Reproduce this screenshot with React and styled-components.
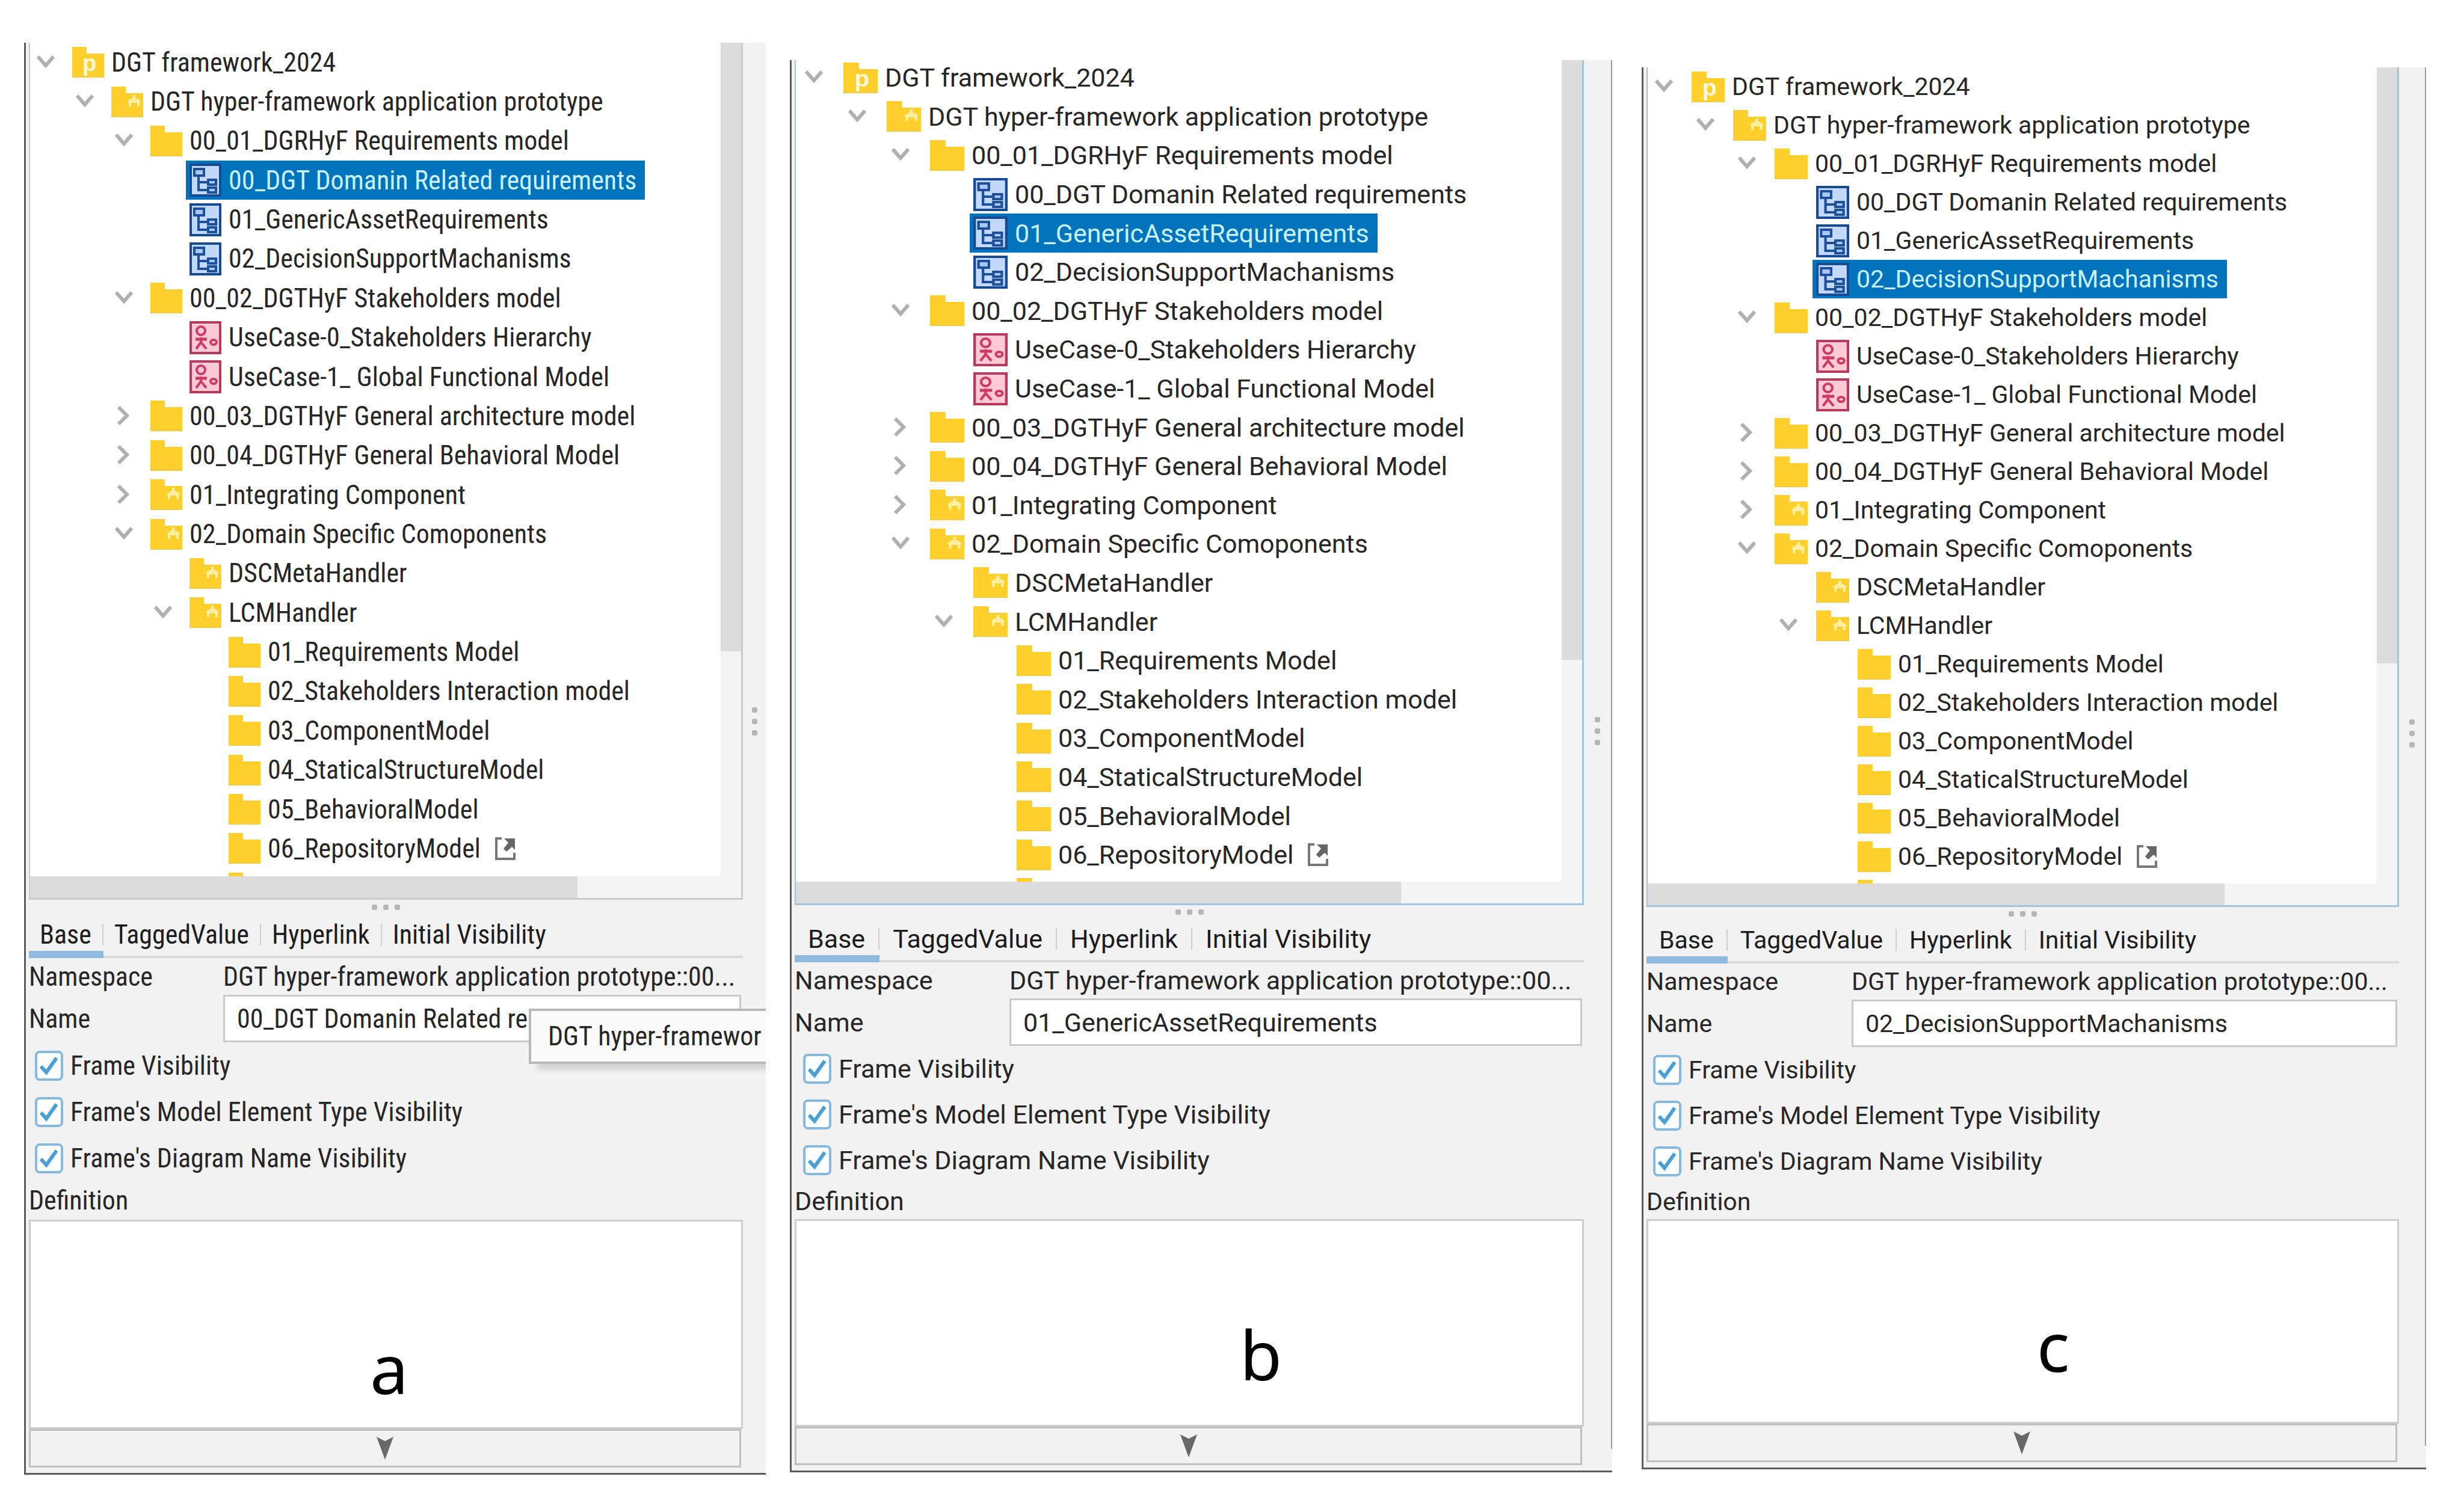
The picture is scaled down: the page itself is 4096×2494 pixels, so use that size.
import React, { useId, useState } from "react";
import styled, { createGlobalStyle, css, ThemeProvider } from "styled-components";

const GlobalStyle = createGlobalStyle`
  * {
    box-sizing: border-box;
  }

  body {
    margin: 0;
    background: #fff;
    color: #262626;
  }

  button, input, textarea {
    font: inherit;
    color: inherit;
  }
`;

const Page = styled.main`
  display: grid;
  grid-template-columns: 1233fr 1367fr 1313fr;
  column-gap: 40px;
  align-items: start;
  min-height: 100vh;
  padding: 0 63px 0 40px;
`;

const Panel = styled.section`
  display: flex;
  margin-top: ${({ theme }) => theme.top}px;
  margin-left: ${({ theme }) => theme.inset}px;
  padding-left: 5px;
  overflow: hidden;
  background: #f2f2f2;
  border-left: 3px solid #5c5c5c;
  border-bottom: 3px solid #5c5c5c;
  font-family: ${({ theme }) => theme.font}, "Liberation Sans", sans-serif;
  font-size: ${({ theme }) => theme.size}px;
  line-height: 52px;
  white-space: nowrap;
`;

const Main = styled.div`
  flex: 1;
  min-width: 0;
  padding-bottom: 9px;
`;

const Gutter = styled.div`
  display: flex;
  flex-direction: column;
  align-items: center;
  gap: 10px;
  flex: none;
  width: ${({ theme }) => theme.gutter}px;
  margin-bottom: 36px;
  padding-top: ${({ theme }) => theme.gripTop}px;
  border-right: ${({ theme }) => (theme.edge ? "2px solid #9a9a9a" : "none")};
`;

const Dot = styled.i`
  width: 9px;
  height: 9px;
  border-radius: 3px;
  background: #b6b6b6;
`;

/* tree */

const TreePane = styled.div`
  border: 3px solid ${({ theme }) => theme.frame};
  border-width: 0 3px 3px 2px;
`;

const TreeView = styled.div`
  display: flex;
  height: ${({ theme }) => theme.viewHeight}px;
  overflow: hidden;
  background: #fff;
`;

const TreeList = styled.ul`
  display: grid;
  grid-auto-rows: 1fr;
  flex: 1;
  height: ${({ theme }) => theme.listHeight}px;
  margin: ${({ theme }) => theme.scrolled}px 0 0;
  padding: 0 0 0 ${({ theme }) => theme.treePad}px;
  list-style: none;
`;

const TreeRow = styled.li`
  display: flex;
  align-items: stretch;
  min-height: 0;
  padding-left: ${({ theme, $depth }) => theme.indent * $depth}px;
`;

const Toggle = styled.button`
  display: flex;
  align-items: center;
  justify-content: center;
  width: 30px;
  padding: 0;
  border: 0;
  background: none;
  visibility: ${({ $hidden }) => ($hidden ? "hidden" : "visible")};
`;

const Node = styled.button`
  display: flex;
  align-items: center;
  gap: 12px;
  margin-left: ${({ theme }) => theme.nodeGap}px;
  padding: 0 14px 0 6px;
  border: 0;
  background: none;
  white-space: pre;

  ${({ $selected }) =>
    $selected &&
    css`
      background: #0073bd;
      color: #c8f2ff;
    `}
`;

const TreeIcon = styled.svg`
  display: block;
  flex: none;
  width: ${({ theme }) => theme.icon}px;
  height: 55px;
`;

const LinkIcon = styled.svg`
  align-self: center;
  width: 34px;
  height: 38px;
  margin-left: 12px;
`;

const Thumb = styled.div`
  background: #dcdcdc;
`;

const ScrollY = styled.div`
  flex: none;
  width: 34px;
  background: #f4f4f4;

  ${Thumb} {
    height: 73%;
  }
`;

const ScrollX = styled.div`
  height: 36px;
  background: #f4f4f4;

  ${Thumb} {
    width: 77%;
    height: 100%;
  }
`;

const Splitter = styled.div`
  display: flex;
  align-items: center;
  justify-content: center;
  gap: 10px;
  height: ${({ theme }) => theme.splitter}px;
`;

/* properties */

const Tabs = styled.div`
  display: flex;
  height: 72px;
  box-shadow: inset 0 -4px #dadada;
`;

const Tab = styled.button`
  display: flex;
  align-items: center;
  padding: 6px 0 0;
  border: 0;
  border-bottom: 12px solid ${({ $active }) => ($active ? "#8fbadd" : "transparent")};
  background: none;
  color: #1c1c1c;

  span {
    padding: 0 ${({ theme }) => theme.tabPad}px;
    line-height: 36px;
  }

  &:not(:last-child) span {
    border-right: 2px solid #cfcfcf;
  }
`;

const Field = styled.div`
  display: grid;
  grid-template-columns: ${({ theme }) => theme.labelWidth}px 1fr;
  align-items: center;
  position: relative;
`;

const NamespaceField = styled(Field)`
  height: ${({ theme }) => theme.namespaceHeight}px;
`;

const NameInput = styled.input`
  min-width: 0;
  height: 79px;
  margin-right: 3px;
  padding: 0 20px;
  border: 3px solid #c9c9c9;
  background: #fff;
`;

const Tooltip = styled.div`
  position: absolute;
  z-index: 1;
  top: 23px;
  left: 70%;
  right: -48px;
  padding: 16px 28px;
  border: 4px solid #b9b9b9;
  background: #fbfbfb;
  box-shadow: 14px 10px 8px rgba(0, 0, 0, 0.12);
`;

const CheckField = styled.label`
  display: flex;
  align-items: center;
  gap: 12px;
  height: ${({ theme }) => theme.checkHeight}px;
  padding-left: ${({ theme }) => theme.checkPad}px;
`;

const CheckBox = styled.span`
  display: grid;
  flex: none;
  width: 47px;
  height: 50px;

  input, svg {
    grid-area: 1 / 1;
    width: 100%;
    height: 100%;
    margin: 0;
  }

  input {
    appearance: none;
    border: 4px solid #86b9dc;
    border-radius: 8px;
    background: #fafeff;
  }

  svg {
    pointer-events: none;
    visibility: hidden;
  }

  input:checked + svg {
    visibility: visible;
  }
`;

const DefinitionLabel = styled.label`
  display: block;
  height: ${({ theme }) => theme.definitionHeight}px;
  line-height: ${({ theme }) => theme.definitionHeight}px;
`;

const Definition = styled.div`
  position: relative;
`;

const DefinitionInput = styled.textarea`
  display: block;
  width: 100%;
  height: ${({ theme }) => theme.definitionBox}px;
  padding: 12px;
  border: 3px solid #cdcdcd;
  background: #fff;
  resize: none;
`;

const Caption = styled.strong`
  position: absolute;
  left: ${({ theme }) => theme.captionX}px;
  bottom: ${({ theme }) => theme.captionY}px;
  transform: translateX(-50%);
  color: #000;
  font-family: "Noto Sans", sans-serif;
  font-size: 114px;
  font-weight: 400;
  line-height: 120px;
`;

const ExpandButton = styled.button`
  display: flex;
  align-items: center;
  justify-content: center;
  width: calc(100% - 3px);
  height: 64px;
  padding: 0;
  border: 3px solid #c0c0c0;
  background: #f2f2f2;
`;

const nodes = [
  { depth: 0, icon: "project", text: "DGT framework_2024", open: true },
  { depth: 1, icon: "package", text: "DGT hyper-framework application prototype", open: true },
  { depth: 2, icon: "folder", text: "00_01_DGRHyF Requirements model", open: true },
  { depth: 3, icon: "requirement", text: "00_DGT Domanin Related requirements" },
  { depth: 3, icon: "requirement", text: "01_GenericAssetRequirements" },
  { depth: 3, icon: "requirement", text: "02_DecisionSupportMachanisms" },
  { depth: 2, icon: "folder", text: "00_02_DGTHyF Stakeholders model", open: true },
  { depth: 3, icon: "usecase", text: "UseCase-0_Stakeholders Hierarchy" },
  { depth: 3, icon: "usecase", text: "UseCase-1_ Global Functional Model" },
  { depth: 2, icon: "folder", text: "00_03_DGTHyF General architecture model", open: false },
  { depth: 2, icon: "folder", text: "00_04_DGTHyF General Behavioral Model", open: false },
  { depth: 2, icon: "package", text: "01_Integrating Component", open: false },
  { depth: 2, icon: "package", text: "02_Domain Specific Comoponents", open: true },
  { depth: 3, icon: "package", text: "DSCMetaHandler" },
  { depth: 3, icon: "package", text: "LCMHandler", open: true },
  { depth: 4, icon: "folder", text: "01_Requirements Model" },
  { depth: 4, icon: "folder", text: "02_Stakeholders Interaction model" },
  { depth: 4, icon: "folder", text: "03_ComponentModel" },
  { depth: 4, icon: "folder", text: "04_StaticalStructureModel" },
  { depth: 4, icon: "folder", text: "05_BehavioralModel" },
  { depth: 4, icon: "folder", text: "06_RepositoryModel", link: true },
  { depth: 4, icon: "folder", text: "" },
];

const tabs = ["Base", "TaggedValue", "Hyperlink", "Initial Visibility"];

const checks = [
  "Frame Visibility",
  "Frame's Model Element Type Visibility",
  "Frame's Diagram Name Visibility",
];

const panels = [
  {
    caption: "a",
    selected: "00_DGT Domanin Related requirements",
    tooltip: "DGT hyper-framewor",
    theme: {
      font: '"Roboto Condensed"', size: 44, top: 71, inset: 0, gutter: 38, edge: false,
      frame: "#cacaca", viewHeight: 1386, listHeight: 1438, scrolled: 0, gripTop: 1105,
      treePad: 11, indent: 65, nodeGap: 23, icon: 53, splitter: 25, tabPad: 18,
      labelWidth: 323, namespaceHeight: 61, checkHeight: 77, checkPad: 10,
      definitionHeight: 64, definitionBox: 348, captionX: 599, captionY: 42,
    },
  },
  {
    caption: "b",
    selected: "01_GenericAssetRequirements",
    theme: {
      font: "Roboto", size: 43, top: 100, inset: 0, gutter: 47, edge: true,
      frame: "#a3c5db", viewHeight: 1366, listHeight: 1421, scrolled: -3, gripTop: 1092,
      treePad: 15, indent: 72, nodeGap: 28, icon: 57, splitter: 23, tabPad: 22,
      labelWidth: 357, namespaceHeight: 60, checkHeight: 76, checkPad: 14,
      definitionHeight: 60, definitionBox: 345, captionX: 775, captionY: 61,
    },
  },
  {
    caption: "c",
    selected: "02_DecisionSupportMachanisms",
    theme: {
      font: "Roboto", size: 41, top: 112, inset: 9, gutter: 45, edge: true,
      frame: "#a3c5db", viewHeight: 1357, listHeight: 1408, scrolled: 0, gripTop: 1084,
      treePad: 12, indent: 69, nodeGap: 25, icon: 55, splitter: 22, tabPad: 21,
      labelWidth: 341, namespaceHeight: 60, checkHeight: 76, checkPad: 11,
      definitionHeight: 58, definitionBox: 340, captionX: 676, captionY: 70,
    },
  },
];

function NodeIcon({ type }) {
  if (type === "requirement") {
    return (
      <TreeIcon viewBox="0 0 53 55" preserveAspectRatio="none" aria-hidden="true">
        <rect x="2" y="2" width="49" height="51" fill="#c3d9fb" stroke="#164a94" strokeWidth="4" />
        <g fill="#a9c8f8" stroke="#1c4f9c" strokeWidth="4">
          <path d="M15 20V44H31M15 31H31" fill="none" />
          <rect x="8" y="9" width="16" height="11" />
          <rect x="31" y="27" width="13" height="8" />
          <rect x="31" y="40" width="13" height="8" />
        </g>
      </TreeIcon>
    );
  }
  if (type === "usecase") {
    return (
      <TreeIcon viewBox="0 0 53 55" preserveAspectRatio="none" aria-hidden="true">
        <rect x="2" y="2" width="49" height="51" fill="#ffc9d6" stroke="#b8395c" strokeWidth="4" />
        <g fill="none" stroke="#cf3a63" strokeWidth="4">
          <ellipse cx="19" cy="16" rx="7" ry="7" />
          <path d="M10 30H29" strokeWidth="5" />
          <path d="M19 27V35L11 46M19 35L28 46" />
          <ellipse cx="40" cy="35" rx="5" ry="4" />
        </g>
      </TreeIcon>
    );
  }
  return (
    <TreeIcon viewBox="0 0 53 55" preserveAspectRatio="none" aria-hidden="true">
      <path d="M0 2H24V13H53V53H0Z" fill="#ffd02b" />
      <path d="M0 51H53V53H0Z" fill="#efcb4c" />
      {type === "project" && (
        <text x="17" y="42" fill="#fff8dc" fontSize="38" fontWeight="700" fontFamily="Liberation Sans, sans-serif">p</text>
      )}
      {type === "package" && (
        <g fill="none" stroke="#fff0a6" strokeWidth="4">
          <path d="M38 16V26M31 35V27H45V35" />
          <path d="M28 27L38 21L48 27" strokeWidth="3" />
        </g>
      )}
    </TreeIcon>
  );
}

function Chevron({ open }) {
  return (
    <svg width="30" height="34" viewBox="0 0 30 34" fill="none" stroke="#b0b0b0" strokeWidth="6" aria-hidden="true">
      {open ? <path d="M2 7L15 22L28 7" /> : <path d="M6 2L20 16L6 30" />}
    </svg>
  );
}

function Tree({ selected, onSelect }) {
  return (
    <TreePane>
      <TreeView>
        <TreeList>
          {nodes.map((node, i) => (
            <TreeRow key={i} $depth={node.depth}>
              <Toggle type="button" aria-label="Toggle" $hidden={node.open === undefined}>
                <Chevron open={node.open} />
              </Toggle>
              <Node type="button" $selected={node.text === selected} onClick={() => onSelect(node.text)}>
                <NodeIcon type={node.icon} />
                {node.text}
                {node.link && (
                  <LinkIcon viewBox="0 0 34 38" aria-hidden="true">
                    <path d="M11 2H2V36H32V26" fill="none" stroke="#777" strokeWidth="4" />
                    <path d="M15 2H33V21L28 16L19 24L14 19L22 9Z" fill="#666" />
                  </LinkIcon>
                )}
              </Node>
            </TreeRow>
          ))}
        </TreeList>
        <ScrollY><Thumb /></ScrollY>
      </TreeView>
      <ScrollX><Thumb /></ScrollX>
    </TreePane>
  );
}

function Dots() {
  return (
    <>
      <Dot />
      <Dot />
      <Dot />
    </>
  );
}

function ModelPanel({ panel }) {
  const id = useId();
  const [selected, setSelected] = useState(panel.selected);
  const [tab, setTab] = useState(tabs[0]);

  return (
    <ThemeProvider theme={panel.theme}>
      <Panel>
        <Main>
          <Tree selected={selected} onSelect={setSelected} />
          <Splitter><Dots /></Splitter>
          <Tabs role="tablist">
            {tabs.map((name) => (
              <Tab key={name} type="button" role="tab" aria-selected={name === tab} $active={name === tab} onClick={() => setTab(name)}>
                <span>{name}</span>
              </Tab>
            ))}
          </Tabs>
          <NamespaceField>
            <span>Namespace</span>
            <span>DGT hyper-framework application prototype::00...</span>
          </NamespaceField>
          <Field>
            <label htmlFor={`${id}-name`}>Name</label>
            <NameInput
              id={`${id}-name`}
              value={panel.tooltip ? "00_DGT Domanin Related re" : selected}
              readOnly
            />
            {panel.tooltip && <Tooltip role="tooltip">{panel.tooltip}</Tooltip>}
          </Field>
          {checks.map((text) => (
            <CheckField key={text}>
              <CheckBox>
                <input type="checkbox" defaultChecked />
                <svg viewBox="0 0 47 50" fill="none" stroke="#4a9fd6" strokeWidth="6" aria-hidden="true">
                  <path d="M10 26L19 36L36 12" />
                </svg>
              </CheckBox>
              {text}
            </CheckField>
          ))}
          <DefinitionLabel htmlFor={`${id}-definition`}>Definition</DefinitionLabel>
          <Definition>
            <DefinitionInput id={`${id}-definition`} />
            <Caption>{panel.caption}</Caption>
          </Definition>
          <ExpandButton type="button" aria-label="Expand">
            <svg width="28" height="38" viewBox="0 0 28 38" aria-hidden="true">
              <path d="M0 0L14 7L28 0L14 38Z" fill="#686868" />
            </svg>
          </ExpandButton>
        </Main>
        <Gutter><Dots /></Gutter>
      </Panel>
    </ThemeProvider>
  );
}

export default function App() {
  return (
    <>
      <GlobalStyle />
      <Page>
        {panels.map((panel) => (
          <ModelPanel key={panel.caption} panel={panel} />
        ))}
      </Page>
    </>
  );
}
